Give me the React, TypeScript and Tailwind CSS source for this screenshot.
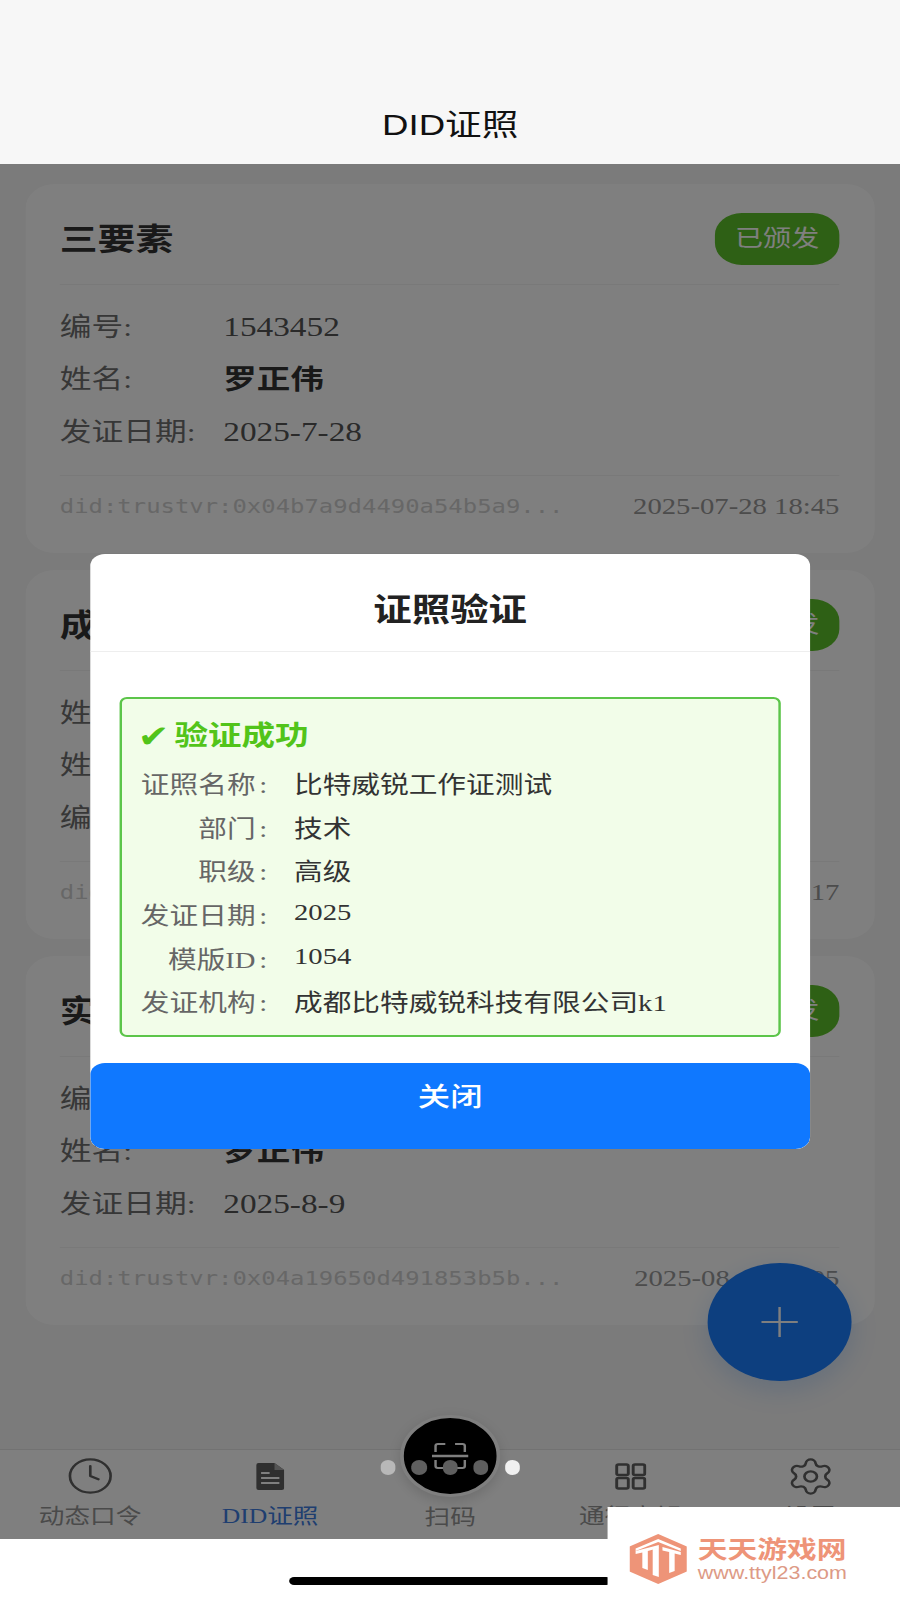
import { Clock, Settings } from 'lucide-react';

type CardProps = {
  title: string;
  rows: { label: string; value?: string; strong?: boolean }[];
  did: string;
  time: string;
};

const cards: CardProps[] = [
  {
    title: '三要素',
    rows: [
      { label: '编号:', value: '1543452' },
      { label: '姓名:', value: '罗正伟', strong: true },
      { label: '发证日期:', value: '2025-7-28' },
    ],
    did: 'did:trustvr:0x04b7a9d4490a54b5a9...',
    time: '2025-07-28 18:45',
  },
  {
    title: '成都',
    rows: [{ label: '姓名:' }, { label: '姓名:' }, { label: '编号:' }],
    did: 'did:trustvr:',
    time: '2025-08-09 11:17',
  },
  {
    title: '实名',
    rows: [
      { label: '编号:' },
      { label: '姓名:', value: '罗正伟', strong: true },
      { label: '发证日期:', value: '2025-8-9' },
    ],
    did: 'did:trustvr:0x04a19650d491853b5b...',
    time: '2025-08-09 11:05',
  },
];

const verifyRows = [
  { label: '证照名称', value: '比特威锐工作证测试' },
  { label: '部门', value: '技术' },
  { label: '职级', value: '高级' },
  { label: '发证日期', value: '2025', lifted: true },
  { label: '模版ID', value: '1054', lifted: true },
  { label: '发证机构', value: '成都比特威锐科技有限公司k1' },
];

function CertCard({ title, rows, did, time }: CardProps) {
  return (
    <div className="h-[369px] shrink-0 rounded-[24px] bg-white pt-[29px] pr-[29px] pl-7">
      <div className="flex items-center justify-between border-b border-[#f2f2f2] pb-[19px]">
        <h2 className="pt-0.5 text-[31px] leading-[50px] font-bold text-[#333]">{title}</h2>
        <span className="flex h-[52px] w-[102px] items-center justify-center rounded-[22px] bg-[#5cc02a] text-[23px] text-white">
          已颁发
        </span>
      </div>
      <div className="my-4">
        {rows.map((row) => (
          <div className="flex h-[52.5px] items-center" key={row.label + row.value}>
            <span className="w-[134px] shrink-0 text-[26px] text-[#6e6e6e]">{row.label}</span>
            <span className={row.strong ? 'text-[27.5px] font-semibold text-[#333]' : 'text-[27.3px] text-[#555]'}>
              {row.value}
            </span>
          </div>
        ))}
      </div>
      <div className="flex h-[60px] items-center justify-between border-t border-[#f2f2f2] pt-1">
        <span className="font-['DejaVu_Sans_Mono',monospace] text-[19.6px] text-[#cfcfcf]">{did}</span>
        <span className="text-[23.5px] text-[#999]">{time}</span>
      </div>
    </div>
  );
}

function DocIcon() {
  return (
    <svg aria-hidden="true" className="h-[27px] w-[23px]" viewBox="0 0 23 27">
      <path d="M2 0h13l8 7v18a2 2 0 0 1-2 2H2a2 2 0 0 1-2-2V2a2 2 0 0 1 2-2z" fill="#5e5e5e" />
      <path d="M15 0l8 7h-8z" fill="#a8a8a8" />
      <path d="M4 10h7M4 15h15M4 20h15" stroke="#fff" strokeWidth="1.8" />
    </svg>
  );
}

function GridIcon() {
  return (
    <svg aria-hidden="true" className="h-[27px] w-[26px]" fill="none" viewBox="0 0 26 27">
      <rect height="10.5" rx="1.5" stroke="#606060" strokeWidth="2.4" width="9.5" x="1.5" y="1.5" />
      <rect height="10.5" rx="1.5" stroke="#606060" strokeWidth="2.4" width="9.5" x="15" y="1.5" />
      <rect height="10.5" rx="1.5" stroke="#606060" strokeWidth="2.4" width="9.5" x="1.5" y="15" />
      <rect height="10.5" rx="1.5" stroke="#606060" strokeWidth="2.4" width="9.5" x="15" y="15" />
    </svg>
  );
}

function ScanIcon() {
  return (
    <svg aria-hidden="true" className="h-[28px] w-[30px]" fill="none" viewBox="0 0 30 28">
      <path
        d="M3 10V4a2 2 0 0 1 2-2h6M19 2h6a2 2 0 0 1 2 2v6M3 18v6a2 2 0 0 0 2 2h6M19 26h6a2 2 0 0 0 2-2v-6"
        stroke="#fff"
        strokeWidth="2"
      />
      <path d="M0 14h30" stroke="#fff" strokeWidth="2.4" />
    </svg>
  );
}

function LogoMark() {
  return (
    <svg aria-hidden="true" className="h-[50px] w-[47px] shrink-0" viewBox="0 0 47 50">
      <path d="M23.5 0L47 12.5v25L23.5 50 0 37.5v-25z" fill="#ee9478" />
      <path d="M5 14.5L23.5 5 42 14.5V17L23.5 8 5 17z" fill="#fff" />
      <path d="M5 17l19-6v3l-9 3v19l-4.5-2V18.5L5 20z" fill="#fff" />
      <path d="M19 15l5-1.5V43l-5-2z" fill="#fff" />
      <path d="M27 13l15 5v3l-5-1.5V37l-4.5 2V18L27 16.5z" fill="#fff" />
    </svg>
  );
}

export default function App() {
  return (
    <div className="relative h-[1600px] w-[738px] origin-top-left scale-x-[1.22] overflow-hidden bg-white font-['Liberation_Serif','Noto_Sans_CJK_SC',serif]">
      <div className="flex h-full flex-col">
        <header className="flex h-[164px] shrink-0 items-end justify-center bg-[#f7f7f7] pb-6">
          <h1 className="font-['Liberation_Sans','Noto_Sans_CJK_SC',sans-serif] text-[30px] leading-[30px] text-[#111]">
            DID证照
          </h1>
        </header>

        <main className="relative flex min-h-0 flex-1 flex-col gap-[17px] bg-[#f6f6f6] px-[21px] pt-5">
          {cards.map((card) => (
            <CertCard key={card.title} {...card} />
          ))}
          <button
            aria-label="新增"
            className="absolute right-10 bottom-[68px] flex h-[118px] w-[118px] items-center justify-center rounded-full bg-[#1a7eff] shadow-[0_8px_24px_rgba(26,126,255,0.2)]"
            type="button"
          >
            <svg aria-hidden="true" className="h-[30px] w-[30px]" fill="none" viewBox="0 0 30 30">
              <path d="M15 0v30M0 15h30" stroke="#fff" strokeWidth="2" />
            </svg>
          </button>
        </main>

        <nav className="relative flex h-[90px] shrink-0 border-t border-[#e4e4e4] bg-white text-[21px] leading-[28px] text-[#949494]">
          <div className="flex flex-1 flex-col items-center pt-[9px]">
            <div className="flex h-[34px] items-center">
              <Clock color="#606060" size={40} strokeWidth={1.3} />
            </div>
            <span className="mt-[9px] whitespace-nowrap">动态口令</span>
          </div>
          <div className="flex flex-1 flex-col items-center pt-[9px]">
            <div className="flex h-[34px] items-center">
              <DocIcon />
            </div>
            <span className="mt-[9px] whitespace-nowrap text-[#3f7de0]">DID证照</span>
          </div>
          <div className="flex flex-1 flex-col items-center pt-[9px]">
            <div className="h-[34px]" />
            <span className="mt-[10px] whitespace-nowrap">扫码</span>
          </div>
          <div className="flex flex-1 flex-col items-center pt-[9px]">
            <div className="flex h-[34px] items-center">
              <GridIcon />
            </div>
            <span className="mt-[9px] whitespace-nowrap">通行密钥</span>
          </div>
          <div className="flex flex-1 flex-col items-center pt-[9px]">
            <div className="flex h-[34px] items-center">
              <Settings color="#606060" size={41} strokeWidth={1.3} />
            </div>
            <span className="mt-[9px] whitespace-nowrap">设置</span>
          </div>
          <div className="absolute -top-[35px] left-1/2 flex h-[82px] w-[82px] -translate-x-1/2 items-center justify-center rounded-full border-[3px] border-white bg-black shadow-[0_4px_12px_rgba(0,0,0,0.15)]">
            <ScanIcon />
          </div>
        </nav>

        <div className="flex h-[61px] shrink-0 items-start justify-center bg-white pt-[38px]">
          <div className="h-2 w-[264px] rounded-full bg-black" />
        </div>
      </div>

      {/* dim layer with the verify dialog */}
      <div className="absolute inset-x-0 top-[164px] flex h-[1375px] items-center justify-center bg-black/50">
        <div className="flex h-[595px] w-[590px] flex-col overflow-hidden rounded-[12px] bg-white">
          <div className="flex h-[98px] shrink-0 items-center justify-center border-b border-[#eeeeee] pt-4">
            <h2 className="text-[31.5px] font-bold text-[#222]">证照验证</h2>
          </div>
          <div className="flex-1 px-6 pt-[45px]">
            <div className="h-[340px] rounded-[6px] border-2 border-[#5cc54a] bg-[#f2fde9] pt-[17px] pl-[13px]">
              <div className="mb-2 flex h-10 items-center text-[27.5px] leading-10 font-bold text-[#52c41a]">
                <span className="w-[30px] shrink-0 font-['DejaVu_Sans',sans-serif] text-[31px]">✔</span>
                <span>验证成功</span>
              </div>
              {verifyRows.map((row) => (
                <div className="flex h-[43.6px] items-center text-[23.5px]" key={row.label}>
                  <span className="w-[106px] shrink-0 text-right whitespace-nowrap text-[#666]">
                    {row.label}
                    <span className="ml-[3px]">:</span>
                  </span>
                  <span className={row.lifted ? 'mb-2 ml-[22px] text-[#333]' : 'ml-[22px] text-[#333]'}>
                    {row.value}
                  </span>
                </div>
              ))}
            </div>
          </div>
          <button
            className="flex h-[86px] shrink-0 items-center justify-center rounded-[12px] bg-[#0f78ff] pb-[17px] text-[26.5px] font-medium text-white"
            type="button"
          >
            关闭
          </button>
        </div>
      </div>

      {/* gallery dots */}
      <div className="absolute top-[1459.5px] left-1/2 flex -translate-x-1/2 gap-[13.1px]">
        <span className="h-[15px] w-[12.3px] rounded-full bg-[#b8b8b8]" />
        <span className="h-[15px] w-[12.3px] rounded-full bg-[#5f5f5f]" />
        <span className="h-[15px] w-[12.3px] rounded-full bg-[#5f5f5f]" />
        <span className="h-[15px] w-[12.3px] rounded-full bg-[#5f5f5f]" />
        <span className="h-[15px] w-[12.3px] rounded-full bg-[#f0f0f0]" />
      </div>

      {/* watermark */}
      <div className="absolute right-0 bottom-0 flex h-[93px] w-[240px] items-center gap-[9px] bg-white pt-2.5 pl-[18px]">
        <LogoMark />
        <div className="flex flex-col">
          <span className="font-['Noto_Sans_CJK_SC',sans-serif] text-[24.4px] leading-[26px] font-bold text-[#ee9478]">
            天天游戏网
          </span>
          <span className="pt-0.5 font-['Liberation_Sans',sans-serif] text-[17.6px] leading-[20px] text-[#dd9a86]">
            www.ttyl23.com
          </span>
        </div>
      </div>
    </div>
  );
}
